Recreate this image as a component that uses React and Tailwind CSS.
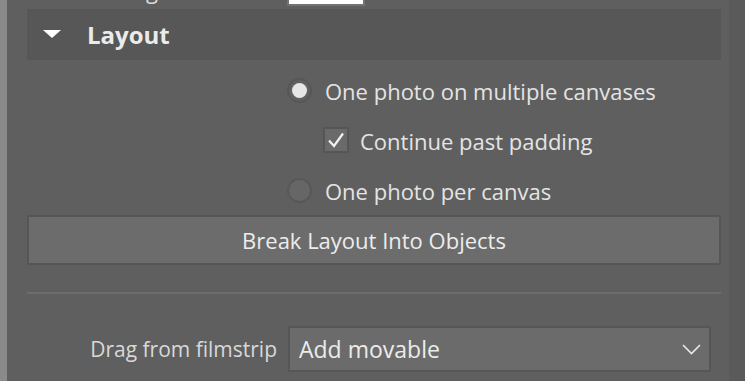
import React from "react";

function Radio({ checked }) {
  return checked ? (
    <div className="w-[25px] h-[25px] rounded-full border-2 border-[#575757] bg-[#606060] flex items-center justify-center shrink-0">
      <div className="w-[15px] h-[15px] rounded-full bg-[#e6e6e6]" />
    </div>
  ) : (
    <div className="w-[25px] h-[25px] rounded-full border-2 border-[#585858] bg-[#666666] shrink-0" />
  );
}

export default function App() {
  return (
    <div className="w-[745px] h-[381px] flex overflow-hidden font-['Open_Sans',sans-serif] text-[#e4e4e4]">
      <div className="w-[7px] bg-[#8a8a8a] shrink-0" />
      <div className="w-[722px] bg-[#5f5f5f] shrink-0 pl-[20px] pr-[8px] flex flex-col">
        {/* partially visible previous row */}
        <div className="h-[9px] overflow-hidden flex items-start">
          <div className="w-[131px] mt-[-21px] h-[22px] text-right text-[22px] leading-[22px] text-[#dcdcdc]">Padding</div>
          <div className="ml-[129px] mt-[-26px] w-[78px] h-[32px] border-2 border-[#727272] bg-white shrink-0" />
        </div>
        {/* header */}
        <div className="h-[51px] bg-[#575757] flex items-center">
          <svg width="18" height="9" viewBox="0 0 18 9" className="ml-[16px] mt-[-1px]">
            <polygon points="0,0 18,0 9,8" fill="#ffffff" />
          </svg>
          <span className="ml-[26px] text-[24px] font-bold text-[#ebebeb] leading-none">Layout</span>
        </div>
        {/* options */}
        <div className="mt-[5px] flex flex-col pl-[260px]">
          <div className="h-[50px] flex items-center">
            <Radio checked />
            <span className="ml-[13px] text-[22px] leading-none mt-[2px]">One photo on multiple canvases</span>
          </div>
          <div className="h-[50px] flex items-center pl-[36px]">
            <div className="w-[26px] h-[26px] border-2 border-[#565656] bg-[#6a6a6a] flex items-center justify-center shrink-0">
              <svg width="18" height="16" viewBox="0 0 18 16">
                <polyline points="2,8.5 7,14 16,1.5" fill="none" stroke="#f2f2f2" strokeWidth="2.2" />
              </svg>
            </div>
            <span className="ml-[11px] text-[22px] leading-none mt-[2px]">Continue past padding</span>
          </div>
          <div className="h-[50px] flex items-center">
            <Radio />
            <span className="ml-[13px] text-[22px] leading-none mt-[2px]">One photo per canvas</span>
          </div>
        </div>
        {/* button */}
        <div className="h-[50px] bg-[#6c6c6c] border-2 border-[#565656] flex items-center justify-center">
          <span className="text-[22px] leading-none text-[#ececec]">Break Layout Into Objects</span>
        </div>
        {/* separator */}
        <div className="mt-[27px] h-[2px] bg-[#6c6c6c]" />
        {/* dropdown row */}
        <div className="mt-[32px] flex items-center">
          <div className="w-[250px] text-right text-[21px] leading-none text-[#d8d8d8]">Drag from filmstrip</div>
          <div className="ml-[11px] w-[423px] h-[46px] bg-[#6b6b6b] border-2 border-[#565656] flex items-center justify-between pl-[9px] pr-[8px]">
            <span className="text-[23px] leading-none text-[#ececec]">Add movable</span>
            <svg width="19" height="11" viewBox="0 0 19 11">
              <polyline points="1,1 9.5,9.5 18,1" fill="none" stroke="#e8e8e8" strokeWidth="1.6" />
            </svg>
          </div>
        </div>
      </div>
      <div className="flex-1 bg-[#5a5a5a]" />
    </div>
  );
}
